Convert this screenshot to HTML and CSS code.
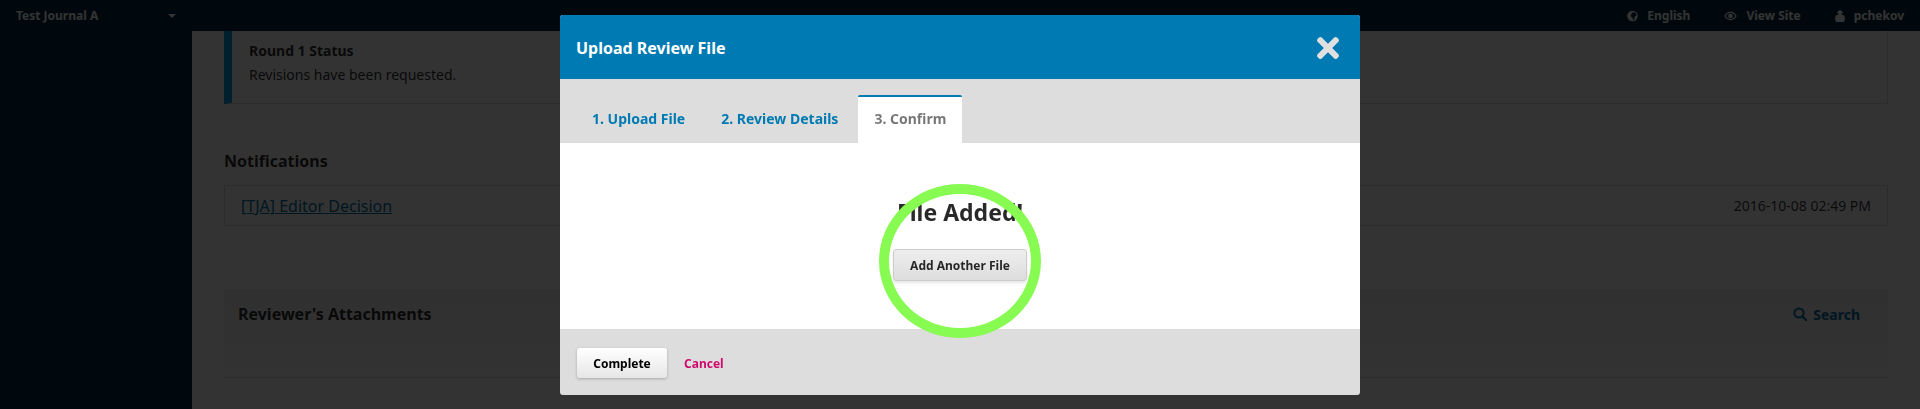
FILE: index.html
```html
<!DOCTYPE html>
<html lang="en">
<head>
    <meta charset="UTF-8">
    <meta name="viewport" content="width=device-width, initial-scale=1.0">
    <title>Upload Review File</title>
    <link rel="stylesheet" href="styles.css">
</head>
<body>
    <header class="topbar">
        <div class="journal">
            <span>Test Journal A</span>
            <span class="caret"></span>
        </div>
        <nav class="usernav">
            <a href="#">
                <svg class="nav-icon" viewBox="0 0 12 12"><circle cx="6" cy="6" r="5.8" fill="currentColor"/><path d="M6.500 2l3 .5 1 3-2 1-.5 2.500-1.500 1.500-.5-3-2-1 .5-2.500z" fill="#002c40"/></svg>
                English
            </a>
            <a href="#">
                <svg class="nav-icon eye" viewBox="0 0 14 10"><path d="M7 .5C4 .5 1.600 2.400.3 5 1.600 7.600 4 9.500 7 9.500s5.400-1.900 6.700-4.500C12.400 2.400 10 .5 7 .5zm0 1.200c2.200 0 4 1.300 5.200 3.300-1.200 2-3 3.300-5.200 3.300S3 7 1.800 5C3 3 4.800 1.700 7 1.700z" fill="currentColor"/><circle cx="7" cy="5" r="2.500" fill="currentColor"/></svg>
                View Site
            </a>
            <a href="#">
                <svg class="nav-icon user" viewBox="0 0 11 13"><circle cx="5.500" cy="3" r="2.800" fill="currentColor"/><path d="M2.200 5.500h6.600c1.300 0 2 1.200 2 3v2.500c0 1.200-.8 2-2 2H2.200c-1.200 0-2-.8-2-2V8.500c0-1.800.7-3 2-3z" fill="currentColor"/></svg>
                pchekov
            </a>
        </nav>
    </header>

    <div class="layout">
        <aside class="sidebar"></aside>
        <main class="main">
            <section class="status">
                <strong>Round 1 Status</strong>
                <p>Revisions have been requested.</p>
            </section>

            <h2 class="section-title">Notifications</h2>
            <div class="notification">
                <a href="#">[TJA] Editor Decision</a>
                <span class="date">2016-10-08 02:49 PM</span>
            </div>

            <section class="panel">
                <div class="panel-head">
                    <h2>Reviewer's Attachments</h2>
                    <a class="search" href="#">
                        <svg class="search-icon" viewBox="0 0 14 14"><circle cx="6" cy="6" r="4.600" fill="none" stroke="currentColor" stroke-width="2"/><path d="M9.300 9.300l3.700 3.700" stroke="currentColor" stroke-width="2.200" stroke-linecap="round"/></svg>
                        Search
                    </a>
                </div>
            </section>
        </main>
    </div>

    <div class="overlay">
        <div class="modal">
            <div class="modal-head">
                <h1>Upload Review File</h1>
                <svg class="close" viewBox="0 0 352 352"><path d="M242.720 176l100.070-100.070c12.280-12.280 12.280-32.190 0-44.480l-22.240-22.240c-12.280-12.280-32.190-12.280-44.480 0L176 109.280 75.930 9.210c-12.280-12.280-32.190-12.280-44.480 0L9.210 31.450c-12.280 12.280-12.280 32.190 0 44.480L109.280 176 9.210 276.070c-12.280 12.280-12.280 32.190 0 44.480l22.240 22.240c12.280 12.280 32.200 12.280 44.480 0L176 242.720l100.070 100.070c12.280 12.280 32.200 12.280 44.480 0l22.240-22.240c12.280-12.280 12.280-32.190 0-44.480L242.720 176z" fill="#e0e0e0"/></svg>
            </div>
            <div class="tabs">
                <a class="tab" href="#">1. Upload File</a>
                <a class="tab" href="#">2. Review Details</a>
                <a class="tab active" href="#">3. Confirm</a>
            </div>
            <div class="modal-body">
                <h2>File Added!</h2>
                <button class="btn btn-add">Add Another File</button>
                <div class="highlight"></div>
            </div>
            <div class="modal-foot">
                <button class="btn btn-complete">Complete</button>
                <a class="cancel" href="#">Cancel</a>
            </div>
        </div>
    </div>
</body>
</html>
```

FILE: styles.css
```css
* {
    box-sizing: border-box;
}

html, body {
    height: 100%;
}

body {
    margin: 0;
    background: #fff;
    color: rgba(0, 0, 0, 0.84);
    font-family: "Noto Sans", sans-serif;
    font-size: 14px;
    overflow: hidden;
}

a {
    text-decoration: none;
}

h1, h2, p {
    margin: 0;
}

.topbar {
    height: 31px;
    background: #002c40;
    display: flex;
    justify-content: space-between;
    align-items: center;
    padding: 0 16px;
    font-size: 12px;
    font-weight: 700;
}

.journal {
    width: 160px;
    display: flex;
    justify-content: space-between;
    align-items: center;
    color: #fff;
}

.caret {
    border-top: 4px solid #fff;
    border-left: 4px solid transparent;
    border-right: 4px solid transparent;
}

.usernav {
    display: flex;
    gap: 34px;
}

.usernav a {
    color: #fff;
    display: flex;
    align-items: center;
    gap: 9px;
}

.nav-icon {
    width: 11px;
    height: 12px;
}

.nav-icon.eye {
    width: 13px;
}

.nav-icon.user {
    width: 10px;
}

.layout {
    display: flex;
    height: calc(100% - 31px);
}

.sidebar {
    width: 192px;
    flex: none;
    background: #002c40;
}

.main {
    flex: 1;
    padding: 0 32px;
}

.status {
    height: 73px;
    padding: 10px 24px 0 17px;
    border: 1px solid #ddd;
    border-top: none;
    border-left: 8px solid #00a0e0;
    line-height: 20px;
}

.status p {
    margin-top: 4px;
}

.section-title {
    margin-top: 45px;
    font-size: 16px;
    line-height: 24px;
    font-weight: 700;
}

.notification {
    margin-top: 12px;
    height: 41px;
    border: 1px solid #ddd;
    padding: 0 16px;
    display: flex;
    justify-content: space-between;
    align-items: center;
}

.notification a {
    color: #0070a8;
    font-size: 16px;
    text-decoration: underline;
}

.date {
    font-size: 14px;
    color: rgba(0, 0, 0, 0.8);
}

.panel {
    margin-top: 63px;
    height: 89px;
    border-bottom: 1px solid #ddd;
    background: linear-gradient(#f0f0f0, #f4f4f4 50%, #fdfdfd);
}

.panel-head {
    display: flex;
    justify-content: space-between;
    align-items: center;
    padding: 13px 28px 0 14px;
}

.panel-head h2 {
    font-size: 16px;
    line-height: 24px;
}

.search {
    color: #0070a8;
    font-size: 14px;
    font-weight: 700;
    display: flex;
    align-items: center;
    gap: 6px;
}

.search-icon {
    width: 14px;
    height: 14px;
}

/* dimmer and dialog */
.overlay {
    position: fixed;
    inset: 0;
    background: rgba(0, 0, 0, 0.8);
    display: flex;
    justify-content: center;
    align-items: flex-start;
    padding-top: 15px;
}

.modal {
    width: 800px;
    border-radius: 3px;
    overflow: hidden;
    background: #ddd;
}

.modal-head {
    height: 64px;
    background: #007ab2;
    display: flex;
    justify-content: space-between;
    align-items: center;
    padding: 2px 21px 0 16px;
}

.modal-head h1 {
    color: #fff;
    font-size: 16px;
    font-weight: 700;
}

.close {
    width: 22px;
    height: 22px;
}

.tabs {
    height: 64px;
    padding: 16px 16px 0;
    display: flex;
    gap: 4px;
}

.tab {
    height: 48px;
    padding: 0 16px 1px;
    color: #007ab2;
    font-size: 14px;
    font-weight: 700;
    display: flex;
    align-items: center;
}

.tab.active {
    background: #fff;
    color: rgba(0, 0, 0, 0.54);
    border-top: 2px solid #007ab2;
    border-radius: 2px 2px 0 0;
    padding-bottom: 3px;
}

.modal-body {
    position: relative;
    height: 186px;
    background: #fff;
    display: flex;
    flex-direction: column;
    align-items: center;
    padding-top: 50px;
}

.modal-body h2 {
    font-size: 23px;
    line-height: 38px;
    font-weight: 700;
}

.btn {
    font-family: inherit;
    font-weight: 700;
    font-size: 12px;
    color: rgba(0, 0, 0, 0.84);
    border: 1px solid #ccc;
    border-radius: 3px;
    cursor: pointer;
}

.btn-add {
    margin-top: 18px;
    width: 134px;
    height: 32px;
    padding: 0;
    background: linear-gradient(#eee, #ddd);
    box-shadow: 0 2px 3px rgba(0, 0, 0, 0.1);
}

/* green ring marking the button in the screenshot */
.highlight {
    position: absolute;
    left: 319px;
    top: 41px;
    width: 162px;
    height: 154px;
    border: 10px solid #88fb52;
    border-radius: 50%;
}

.modal-foot {
    height: 66px;
    padding: 19px 17px 0;
    display: flex;
    align-items: flex-start;
    gap: 17px;
}

.btn-complete {
    width: 90px;
    height: 30px;
    padding: 0;
    color: #000;
    border: none;
    background: linear-gradient(#fff, #e6e6e6);
    box-shadow: 0 1px 3px rgba(0, 0, 0, 0.25);
}

.cancel {
    color: #d00a6c;
    font-size: 12px;
    font-weight: 700;
    line-height: 31px;
}
```
